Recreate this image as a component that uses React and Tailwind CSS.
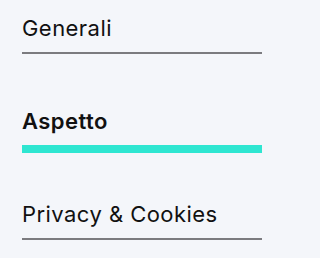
const items = [
  { label: 'Generali', active: false },
  { label: 'Aspetto', active: true },
  { label: 'Privacy & Cookies', active: false },
];

export default function App() {
  return (
    <div className="min-h-[258px] w-full bg-[#f4f6fa] px-[22px] pt-[14px] font-['Inter',sans-serif]">
      <nav className="flex w-[240px] flex-col gap-[53px]">
        {items.map((item) => (
          <a
            key={item.label}
            href="#"
            className={`block pb-[10px] text-[22px] leading-[28px] tracking-[0.45px] text-[#111] ${
              item.active
                ? '-mb-[6px] border-b-8 border-[#2ee6d1] font-semibold'
                : 'border-b-2 border-[#7b7b7f]'
            }`}
          >
            {item.label}
          </a>
        ))}
      </nav>
    </div>
  );
}
